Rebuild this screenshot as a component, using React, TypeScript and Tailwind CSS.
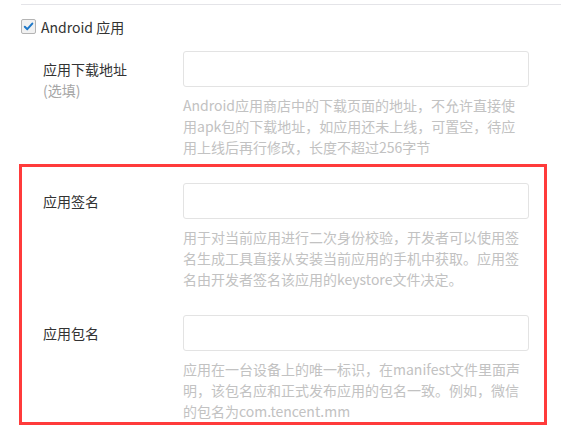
import React from 'react';

const font = { fontFamily: '"Noto Sans CJK SC", "Noto Sans", sans-serif' };

function Checkbox() {
  return (
    <div className="w-[15px] h-[15px] rounded-[2px] border border-[#b4b4b4] bg-[#f1f1f1] flex items-center justify-center">
      <svg width="11" height="11" viewBox="0 0 11 11">
        <path d="M1.8 5.8 L4.3 8.2 L9.3 2.6" fill="none" stroke="#1e78c8" strokeWidth="2" strokeLinecap="round" strokeLinejoin="round" />
      </svg>
    </div>
  );
}

function FieldRow({ label, hint, help }: { label: string; hint?: string; help: string }) {
  return (
    <div className="flex">
      <div className="w-[140px] shrink-0 pt-2 text-[14px] leading-[21px] text-[#333]">
        <div>{label}</div>
        {hint && <div className="text-[#a6a6a6]">{hint}</div>}
      </div>
      <div className="w-[346px] shrink-0">
        <div className="h-[36px] rounded-[3px] border border-[#e3e3e3] bg-white" />
        <p className="mt-2 text-[14px] leading-[21px] text-[#c2c2c2]">{help}</p>
      </div>
    </div>
  );
}

export default function App() {
  return (
    <div className="w-[564px] h-[429px] overflow-hidden bg-white" style={font}>
      <div className="pt-1">
        <div className="ml-[21px] w-[540px] h-px bg-[#e4e4e8]" />
      </div>

      <div className="mt-[14px] ml-[21px] flex items-center gap-[5px] h-[15px]">
        <Checkbox />
        <span className="text-[14px] leading-4 text-[#333]">Android 应用</span>
      </div>

      <div className="mt-[17px] pl-[43px]">
        <FieldRow
          label="应用下载地址"
          hint="(选填)"
          help="Android应用商店中的下载页面的地址，不允许直接使用apk包的下载地址，如应用还未上线，可置空，待应用上线后再行修改，长度不超过256字节"
        />
      </div>

      <div className="mt-[6px] ml-[19px] w-[528px] h-[261px] border-[3px] border-[#ff3b3b] pt-4 pl-[21px] flex flex-col gap-[25px]">
        <FieldRow
          label="应用签名"
          help="用于对当前应用进行二次身份校验，开发者可以使用签名生成工具直接从安装当前应用的手机中获取。应用签名由开发者签名该应用的keystore文件决定。"
        />
        <FieldRow
          label="应用包名"
          help="应用在一台设备上的唯一标识，在manifest文件里面声明，该包名应和正式发布应用的包名一致。例如，微信的包名为com.tencent.mm"
        />
      </div>
    </div>
  );
}
